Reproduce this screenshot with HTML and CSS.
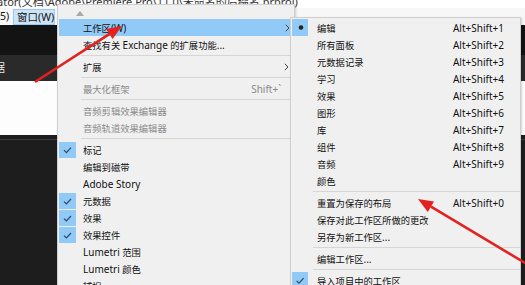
FILE: index.html
```html
<!DOCTYPE html>
<html lang="zh-CN">
<head>
<meta charset="utf-8">
<link rel="stylesheet" href="styles.css">
</head>
<body>
<div class="app">
  <div class="titlebar"><span class="title">ator(文档\Adobe\Premiere Pro\11.0\未命名的后缀名.prproj)</span></div>
  <div class="menubar">
    <span class="mb-item cut">5)</span>
    <span class="mb-item active">窗口(W)</span>
  </div>
  <div class="band black"></div>
  <div class="band panel"><span class="panel-text">据</span></div>
  <div class="band white"></div>
  <div class="band dark"><div class="rule"></div></div>
</div>

<div class="menu menu-main">
  <div class="scroll-up"><svg width="8" height="5" viewBox="0 0 8 5"><polygon points="0,5 8,5 4,0" fill="#a8a8a8"/></svg></div>
  <div class="item hot"><span class="chk"></span><span class="label">工作区<span class="lat">(W)</span></span><span class="sc"></span><span class="sub"><svg width="5" height="8" viewBox="0 0 5 8"><polyline points="0.8,0.8 4,4 0.8,7.2" fill="none" stroke="#444" stroke-width="1"/></svg></span></div>
  <div class="item"><span class="chk"></span><span class="label">查找有关 <span class="lat">Exchange</span> 的扩展功能<span class="lat">...</span></span><span class="sc"></span><span class="sub"></span></div>
  <div class="sep"></div>
  <div class="item"><span class="chk"></span><span class="label">扩展</span><span class="sc"></span><span class="sub"><svg width="5" height="8" viewBox="0 0 5 8"><polyline points="0.8,0.8 4,4 0.8,7.2" fill="none" stroke="#444" stroke-width="1"/></svg></span></div>
  <div class="sep"></div>
  <div class="item off"><span class="chk"></span><span class="label">最大化框架</span><span class="sc lat">Shift+`</span><span class="sub"></span></div>
  <div class="sep"></div>
  <div class="item off"><span class="chk"></span><span class="label">音频剪辑效果编辑器</span><span class="sc"></span><span class="sub"></span></div>
  <div class="item off"><span class="chk"></span><span class="label">音频轨道效果编辑器</span><span class="sc"></span><span class="sub"></span></div>
  <div class="sep"></div>
  <div class="item"><span class="chk on"><svg width="17" height="16" viewBox="0 0 17 16"><polyline points="5,8.2 7.4,10.6 12,5.6" fill="none" stroke="#2b4a66" stroke-width="1.2"/></svg></span><span class="label">标记</span><span class="sc"></span><span class="sub"></span></div>
  <div class="item"><span class="chk"></span><span class="label">编辑到磁带</span><span class="sc"></span><span class="sub"></span></div>
  <div class="item"><span class="chk"></span><span class="label lat">Adobe Story</span><span class="sc"></span><span class="sub"></span></div>
  <div class="item"><span class="chk on"><svg width="17" height="17" viewBox="0 0 17 17"><polyline points="5,8.6 7.4,11 12,6" fill="none" stroke="#2b4a66" stroke-width="1.2"/></svg></span><span class="label">元数据</span><span class="sc"></span><span class="sub"></span></div>
  <div class="item"><span class="chk on"><svg width="17" height="17" viewBox="0 0 17 17"><polyline points="5,8.6 7.4,11 12,6" fill="none" stroke="#2b4a66" stroke-width="1.2"/></svg></span><span class="label">效果</span><span class="sc"></span><span class="sub"></span></div>
  <div class="item"><span class="chk on"><svg width="17" height="17" viewBox="0 0 17 17"><polyline points="5,8.6 7.4,11 12,6" fill="none" stroke="#2b4a66" stroke-width="1.2"/></svg></span><span class="label">效果控件</span><span class="sc"></span><span class="sub"></span></div>
  <div class="item"><span class="chk"></span><span class="label"><span class="lat">Lumetri</span> 范围</span><span class="sc"></span><span class="sub"></span></div>
  <div class="item"><span class="chk"></span><span class="label"><span class="lat">Lumetri</span> 颜色</span><span class="sc"></span><span class="sub"></span></div>
  <div class="item"><span class="chk"></span><span class="label">捕捉</span><span class="sc"></span><span class="sub"></span></div>
</div>

<div class="menu menu-sub">
  <div class="item"><span class="chk dot"><svg width="16" height="16" viewBox="0 0 16 16"><circle cx="9" cy="8.5" r="2.3" fill="#222"/></svg></span><span class="label">编辑</span><span class="sc lat">Alt+Shift+1</span></div>
  <div class="item"><span class="chk"></span><span class="label">所有面板</span><span class="sc lat">Alt+Shift+2</span></div>
  <div class="item"><span class="chk"></span><span class="label">元数据记录</span><span class="sc lat">Alt+Shift+3</span></div>
  <div class="item"><span class="chk"></span><span class="label">学习</span><span class="sc lat">Alt+Shift+4</span></div>
  <div class="item"><span class="chk"></span><span class="label">效果</span><span class="sc lat">Alt+Shift+5</span></div>
  <div class="item"><span class="chk"></span><span class="label">图形</span><span class="sc lat">Alt+Shift+6</span></div>
  <div class="item"><span class="chk"></span><span class="label">库</span><span class="sc lat">Alt+Shift+7</span></div>
  <div class="item"><span class="chk"></span><span class="label">组件</span><span class="sc lat">Alt+Shift+8</span></div>
  <div class="item"><span class="chk"></span><span class="label">音频</span><span class="sc lat">Alt+Shift+9</span></div>
  <div class="item"><span class="chk"></span><span class="label">颜色</span><span class="sc"></span></div>
  <div class="sep"></div>
  <div class="item"><span class="chk"></span><span class="label">重置为保存的布局</span><span class="sc lat">Alt+Shift+0</span></div>
  <div class="item"><span class="chk"></span><span class="label">保存对此工作区所做的更改</span><span class="sc"></span></div>
  <div class="item"><span class="chk"></span><span class="label">另存为新工作区<span class="lat">...</span></span><span class="sc"></span></div>
  <div class="sep"></div>
  <div class="item"><span class="chk"></span><span class="label">编辑工作区<span class="lat">...</span></span><span class="sc"></span></div>
  <div class="sep"></div>
  <div class="item"><span class="chk on"><svg width="16" height="17" viewBox="0 0 16 17"><polyline points="4.6,8.8 7,11.2 11.6,6.2" fill="none" stroke="#2b4a66" stroke-width="1.2"/></svg></span><span class="label">导入项目中的工作区</span><span class="sc"></span></div>
</div>

<svg class="arrows" width="525" height="285" viewBox="0 0 525 285">
  <line x1="35" y1="82" x2="110" y2="33.6" stroke="#e3211f" stroke-width="2.6"/>
  <polygon points="122,26 112.6,39.1 106.2,29.1" fill="#e3211f"/>
  <line x1="525" y1="263" x2="431" y2="206.7" stroke="#e3211f" stroke-width="2.6"/>
  <polygon points="418,199 434,201.5 427.8,211.9" fill="#e3211f"/>
</svg>
</body>
</html>
```

FILE: styles.css
```css
* { box-sizing: border-box; }
html, body { margin: 0; padding: 0; }
body {
  width: 525px;
  height: 285px;
  overflow: hidden;
  position: relative;
  background: #1c1c1c;
  font-family: "Noto Sans", "Noto Sans CJK SC", sans-serif;
  font-size: 9.3px;
  color: #111;
}
.app { display: flex; flex-direction: column; height: 285px; }
.titlebar {
  height: 8px;
  background: #fff;
  overflow: hidden;
  line-height: 6px;
  font-size: 11px;
  color: #333;
  white-space: nowrap;
}
.title { position: relative; top: -1px; margin-left: -3px; }
.menubar {
  height: 17px;
  background: #f7f7f7;
  display: flex;
  align-items: stretch;
  font-size: 10.5px;
  line-height: 15px;
  white-space: nowrap;
  overflow: hidden;
}
.mb-item { padding: 0 4px; }
.mb-item.cut { margin-left: -4px; padding: 1px 3px 0 4px; width: 17px; }
.mb-item.active {
  background: #cce4f7;
  border: 1px solid #99c9ef;
  width: 42px;
  padding: 0 3px;
  margin-top: 1px;
}
.band { flex: none; }
.band.black { height: 30px; background: #131313; }
.band.panel {
  height: 26px;
  background: #2a2a2a;
  color: #e8e8e8;
  font-size: 11px;
  line-height: 26px;
  overflow: hidden;
  white-space: nowrap;
}
.panel-text { margin-left: -6px; }
.band.white { height: 54px; background: #fdfdfd; }
.band.dark { flex: 1; background: #1d1d1d; padding-top: 4px; }
.rule { height: 1px; background: #3a3a3a; }

.menu {
  position: absolute;
  background: #f0f0f0;
  border: 1px solid #cfcfcf;
  border-bottom: none;
  box-shadow: 1px 1px 2px rgba(0,0,0,0.18);
  overflow: hidden;
}
.menu-main { left: 57px; top: 4px; width: 238px; height: 281px; }
.menu-sub { left: 290px; top: 17px; width: 231px; height: 268px; padding-top: 1px; }
.scroll-up { height: 14px; display: flex; align-items: center; padding-left: 18px; padding-top: 2px; }

.item {
  display: flex;
  align-items: center;
  height: 17px;
  margin: 0 1px;
  white-space: nowrap;
}
.item.hot { background: #91c9f7; margin-right: 0; }
.item.off { color: #8a8a8a; }
.chk { flex: none; width: 17px; height: 17px; display: flex; }
.menu-sub .chk { width: 16px; }
.chk.on, .chk.dot { background: #91c9f7; }
.menu-main .chk.on { height: 16px; margin-top: 1px; }
.label { flex: 1; padding-left: 7px; }
.menu-sub .label { padding-left: 9px; }
.sc { flex: none; text-align: right; }
.menu-main .sc { padding-right: 2px; }
.menu-sub .sc { padding-right: 15px; }
.sub { flex: none; width: 10px; display: flex; align-items: center; padding-left: 1px; }
.lat { font-size: 10px; }
.sep { height: 5px; display: flex; align-items: center; padding-left: 23px; }
.menu-sub .sep { padding-left: 22px; }
.sep::after { content: ""; flex: 1; height: 1px; background: #d6d6d6; }

.arrows { position: absolute; left: 0; top: 0; pointer-events: none; }
```
